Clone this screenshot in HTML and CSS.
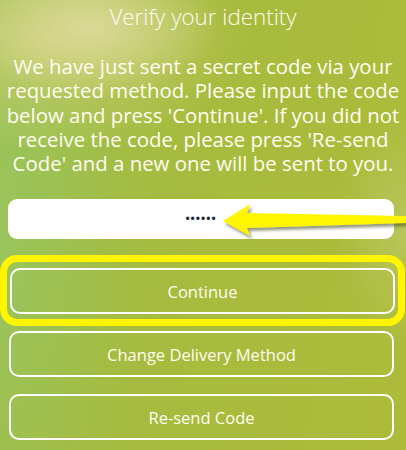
FILE: index.html
```html
<!DOCTYPE html>
<html lang="en">
<head>
<meta charset="utf-8">
<title>Verify your identity</title>
<link rel="stylesheet" href="styles.css">
</head>
<body>
<main class="page">
  <h1 class="title">Verify your identity</h1>
  <p class="intro">We have just sent a secret code via your requested method. Please input the code below and press 'Continue'. If you did not receive the code, please press 'Re-send Code' and a new one will be sent to you.</p>
  <div class="field">
    <input class="code-input" type="password" value="123456" aria-label="Code">
  </div>
  <div class="highlight">
    <button class="btn" type="button">Continue</button>
  </div>
  <div class="actions">
    <button class="btn" type="button">Change Delivery Method</button>
    <button class="btn" type="button">Re-send Code</button>
  </div>
  <svg class="arrow" width="190" height="44" viewBox="216 198 190 44" aria-hidden="true">
    <defs>
      <filter id="sh" x="-20%" y="-50%" width="140%" height="200%">
        <feDropShadow dx="2" dy="3" stdDeviation="1.6" flood-color="#3a4410" flood-opacity="0.55"/>
      </filter>
    </defs>
    <polygon filter="url(#sh)" fill="#fff500" points="223,221 250,204 247,213 406,216 406,223 247,228 250,236"/>
  </svg>
</main>
</body>
</html>
```

FILE: styles.css
```css
html, body {
  margin: 0;
  padding: 0;
}
body {
  width: 406px;
  height: 450px;
  overflow: hidden;
  font-family: "Open Sans", Lato, sans-serif;
  color: #fffdf0;
  background:
    radial-gradient(ellipse 130px 70px at 90px 28px, rgba(222, 220, 160, 0.85), rgba(222, 220, 160, 0) 100%),
    radial-gradient(ellipse 200px 110px at 50px 40px, rgba(215, 210, 120, 0.7), rgba(215, 210, 120, 0) 100%),
    radial-gradient(ellipse 70px 120px at 406px 230px, rgba(200, 210, 130, 0.45), rgba(200, 210, 130, 0) 100%),
    radial-gradient(ellipse 120px 260px at 0px 250px, rgba(150, 200, 100, 0.6), rgba(150, 200, 100, 0) 100%),
    linear-gradient(100deg, #9cc054 0%, #a6bb3e 45%, #adbb3a 100%);
}
.page {
  position: relative;
  display: flex;
  flex-direction: column;
  height: 450px;
}
.title {
  margin: 3px 0 0;
  font-weight: 300;
  font-size: 22.4px;
  line-height: 28px;
  text-align: center;
}
.intro {
  margin: 23px 6px 0;
  font-weight: 400;
  font-size: 20.4px;
  line-height: 24.25px;
  text-align: center;
}
.field {
  margin: 24px 12px 0 8px;
}
.code-input {
  display: block;
  box-sizing: border-box;
  width: 100%;
  height: 40px;
  border: none;
  border-radius: 9px;
  background: #ffffff;
  text-align: center;
  font-size: 12px;
  letter-spacing: 1px;
  color: #1f2a3a;
  outline: none;
  padding: 0;
}
.highlight {
  margin: 16px 1px 0 0;
  border: 7px solid #fff500;
  border-radius: 17px;
  padding: 6px 3px 5px 3px;
}
.btn {
  display: block;
  box-sizing: border-box;
  width: 100%;
  height: 46px;
  border: 2px solid #ffffff;
  border-radius: 10px;
  background: transparent;
  color: #fffdf0;
  font-family: "Open Sans", Lato, sans-serif;
  font-size: 16.5px;
  font-weight: 400;
  padding: 0;
}
.actions {
  display: flex;
  flex-direction: column;
  gap: 17px;
  margin: 5px 12px 0 9px;
}
.arrow {
  position: absolute;
  left: 216px;
  top: 198px;
}
```
